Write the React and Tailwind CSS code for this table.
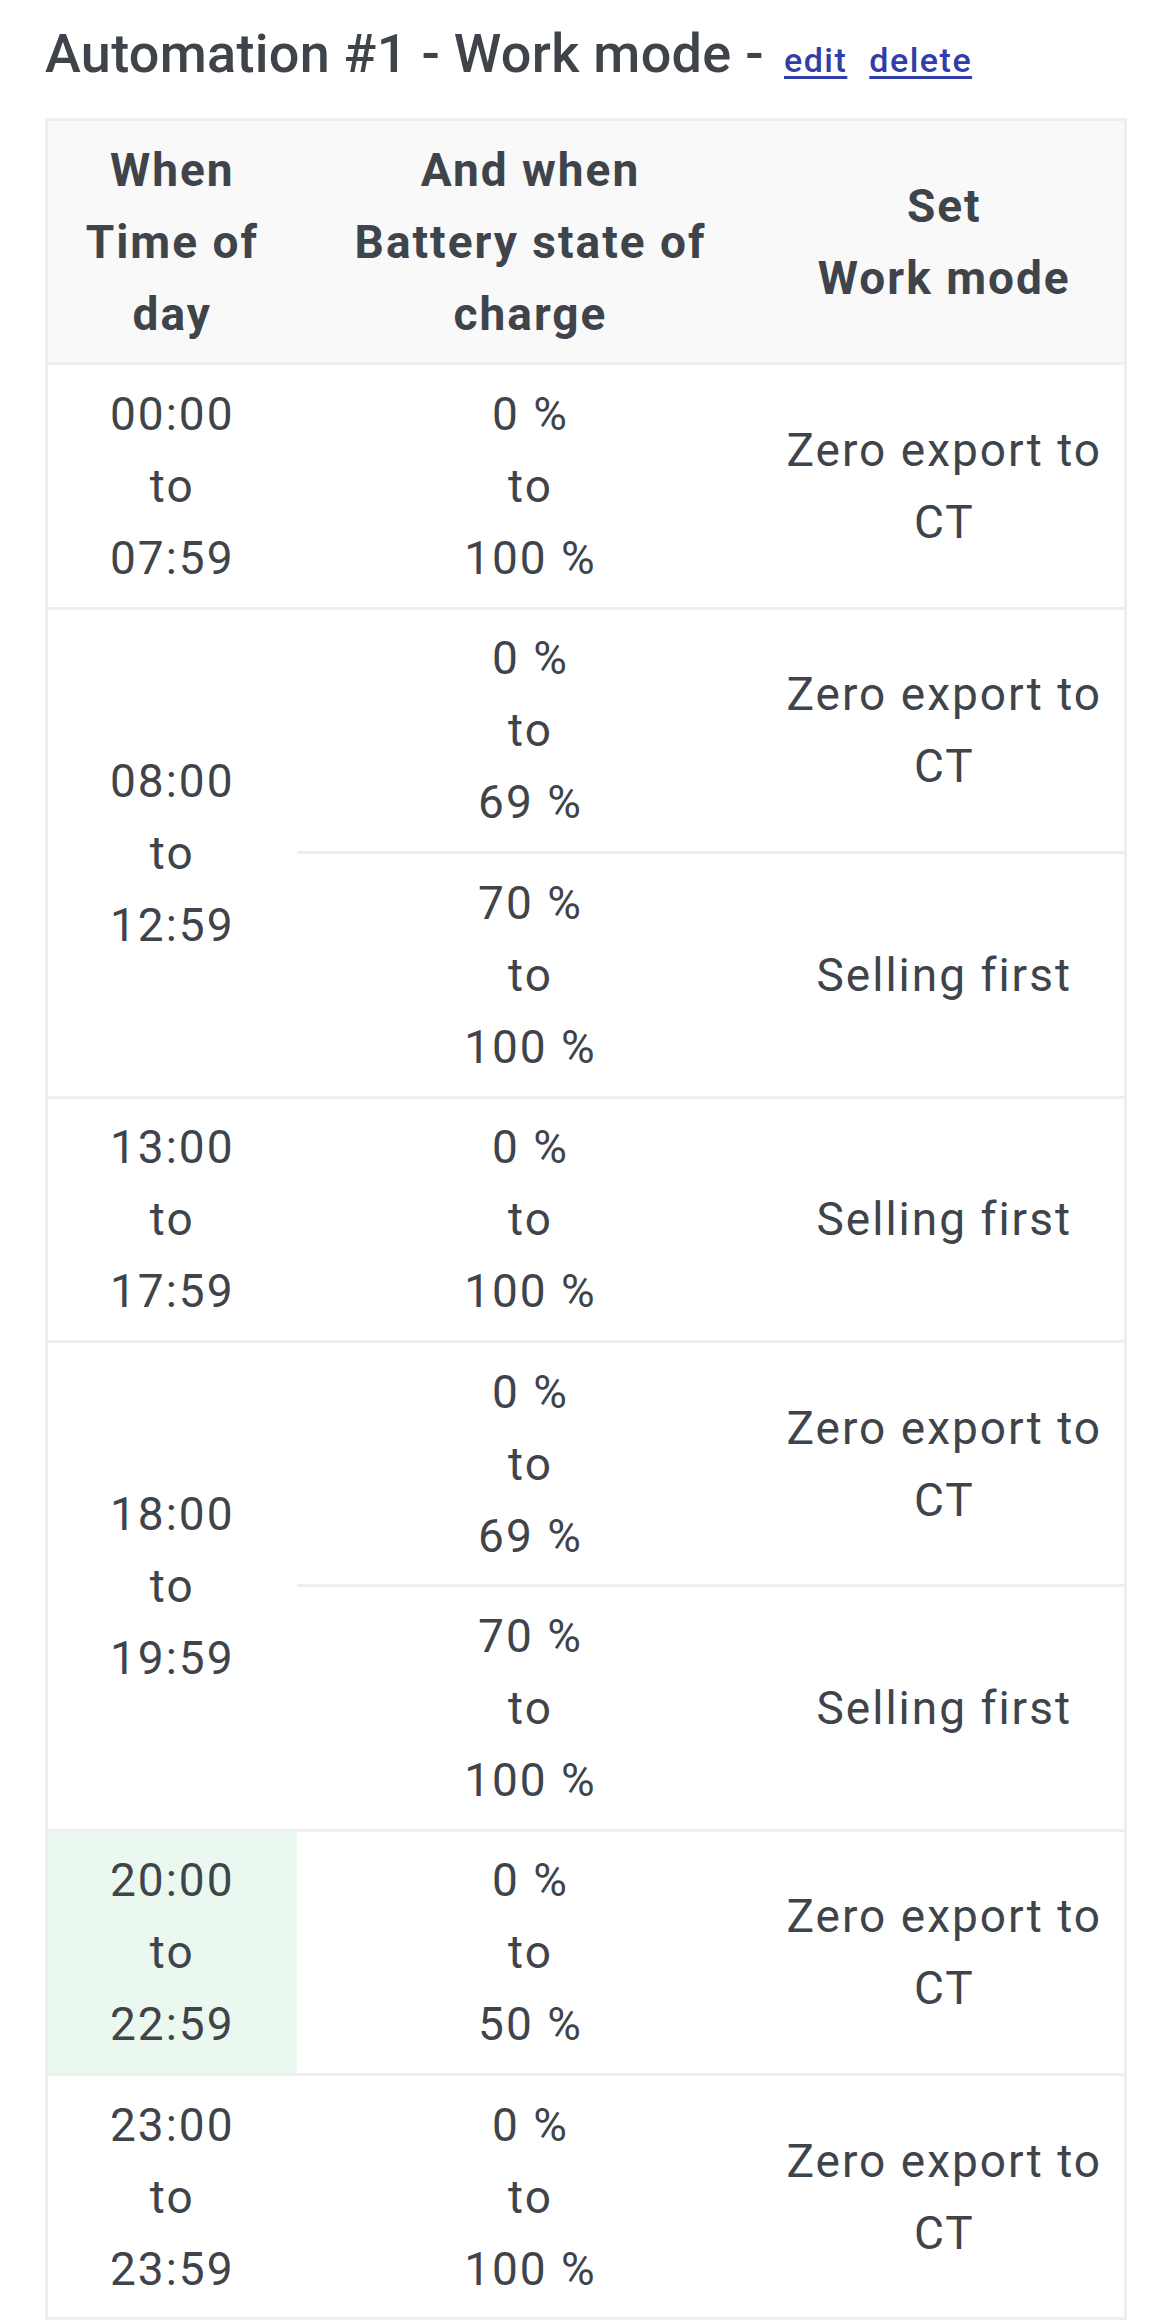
const rows = [
  { time: ['00:00', '07:59'], items: [{ soc: ['0 %', '100 %'], mode: 'Zero export to CT' }] },
  {
    time: ['08:00', '12:59'],
    items: [
      { soc: ['0 %', '69 %'], mode: 'Zero export to CT' },
      { soc: ['70 %', '100 %'], mode: 'Selling first' },
    ],
  },
  { time: ['13:00', '17:59'], items: [{ soc: ['0 %', '100 %'], mode: 'Selling first' }] },
  {
    time: ['18:00', '19:59'],
    items: [
      { soc: ['0 %', '69 %'], mode: 'Zero export to CT' },
      { soc: ['70 %', '100 %'], mode: 'Selling first' },
    ],
  },
  { time: ['20:00', '22:59'], items: [{ soc: ['0 %', '50 %'], mode: 'Zero export to CT' }], active: true },
  { time: ['23:00', '23:59'], items: [{ soc: ['0 %', '100 %'], mode: 'Zero export to CT' }] },
];

// only horizontal rules between rows, no vertical ones
const cell = 'border-y-[3px] border-[#eeeeee] px-3 py-[12.7px] text-center align-middle';

const Range = ({ from, to }) => (
  <>
    {from}
    <br />
    to
    <br />
    {to}
  </>
);

export default function App() {
  return (
    <div
      className="min-h-screen bg-white px-[45px] pt-[22px] text-[#3f444b]"
      style={{ fontFamily: 'Roboto, "Open Sans", sans-serif' }}
    >
      <h1 className="flex items-baseline text-[54px] font-medium leading-[64px] tracking-[0.3px]">
        Automation #1 - Work mode -
        <a href="#" className="ml-[20px] text-[34px] font-medium tracking-[1.5px] text-[#2f3ea8] underline decoration-[3px] underline-offset-[4px]">
          edit
        </a>
        <a href="#" className="ml-[22px] text-[34px] font-medium tracking-[1.5px] text-[#2f3ea8] underline decoration-[3px] underline-offset-[4px]">
          delete
        </a>
      </h1>

      <table className="mt-[26px] w-[1079px] table-fixed border-collapse border-[3px] border-[#eeeeee] text-[46px] leading-[72px] tracking-[2px]">
        <colgroup>
          <col className="w-[250px]" />
          <col className="w-[468px]" />
          <col className="w-[361px]" />
        </colgroup>
        <thead>
          <tr className="bg-[#f9f9f9] font-bold">
            <th className={cell}>
              When
              <br />
              Time of day
            </th>
            <th className={cell}>
              And when
              <br />
              Battery state of charge
            </th>
            <th className={cell}>
              Set
              <br />
              Work mode
            </th>
          </tr>
        </thead>
        <tbody>
          {rows.map((r) =>
            r.items.map((it, i) => (
              <tr key={r.time[0] + i}>
                {i === 0 && (
                  <td rowSpan={r.items.length} className={`${cell} ${r.active ? 'bg-[#eaf8f0]' : ''}`}>
                    <Range from={r.time[0]} to={r.time[1]} />
                  </td>
                )}
                <td className={cell}>
                  <Range from={it.soc[0]} to={it.soc[1]} />
                </td>
                <td className={cell}>{it.mode}</td>
              </tr>
            ))
          )}
        </tbody>
      </table>
    </div>
  );
}
